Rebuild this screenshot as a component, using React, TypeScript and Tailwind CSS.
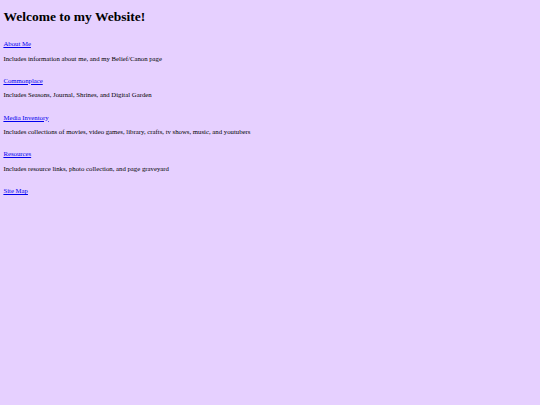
const sections = [
  { name: 'About Me', desc: 'Includes information about me, and my Belief/Canon page' },
  { name: 'Commonplace', desc: 'Includes Seasons, Journal, Shrines, and Digital Garden' },
  {
    name: 'Media Inventory',
    desc: 'Includes collections of movies, video games, library, crafts, tv shows, music, and youtubers',
  },
  { name: 'Resources', desc: 'Includes resource links, photo collection, and page graveyard' },
]

export default function App() {
  return (
    <div className="min-h-screen w-full bg-[#e6d0ff] px-[3.4px] text-black [font-family:'Liberation_Serif','Times_New_Roman',serif]">
      <h1 className="pt-[9px] text-[13.5px] leading-[15.5px] font-bold">Welcome to my Website!</h1>
      <div className="mt-[15.6px] flex flex-col text-[6.75px] leading-[7.75px]">
        {sections.map((s) => (
          <div key={s.name} className="mb-[14.5px]">
            <p>
              <a href="#" className="text-[#0000ee] underline">
                {s.name}
              </a>
            </p>
            <p className="mt-[6.75px]">{s.desc}</p>
          </div>
        ))}
        <p>
          <a href="#" className="text-[#0000ee] underline">
            Site Map
          </a>
        </p>
      </div>
    </div>
  )
}
